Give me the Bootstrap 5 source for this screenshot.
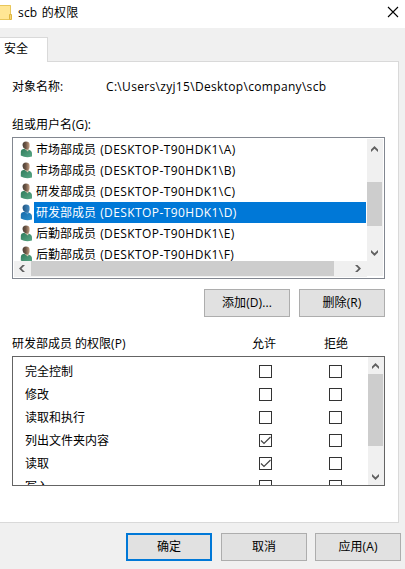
<!DOCTYPE html>
<html lang="zh-CN">
<head>
<meta charset="utf-8">
<meta name="viewport" content="width=device-width, initial-scale=1">
<title>scb 的权限</title>
<link href="https://cdn.jsdelivr.net/npm/bootstrap@5.3.0/dist/css/bootstrap.min.css" rel="stylesheet">
<style>
body{font:12px/16px "Open Sans","Noto Sans CJK SC",sans-serif;color:#000;background:#f0f0f0;width:405px;height:569px;overflow:hidden}
.titlebar{height:28px;padding-right:6px}
.folder{width:12px;height:17px;margin-top:-4px}
.title-text{margin-left:6px;margin-top:-3px;word-spacing:1px;letter-spacing:.2px}
.close-x{margin-top:-4px}
.tab{width:48px;height:25px;margin-top:9px;margin-bottom:-1px;border:1px solid #d9d9d9;border-width:1px 1px 0 0;padding:3px 0 0 4px;position:relative}
.page{width:399px;height:462px;border:1px solid #d9d9d9;border-left:0;padding:17px 13px 0 12px}
.obj-label{width:94px}
.path{letter-spacing:.32px}
.lbl-users{margin-top:22px;margin-bottom:4px}
.listbox{width:373px;height:142px;border:1px solid #828790;padding:1px}
.rows{width:353px;height:122px}
.user{height:21px;flex:none}
.user svg{width:14px;height:17px;margin:2px 0 0 6px;flex:none}
.user div{width:332px;height:21px;line-height:21px;padding-left:2px}
.user.sel div{background:#0078d7;color:#fff}
.host{letter-spacing:.42px;margin-left:1px}
.vbar{background:#f0f0f0;width:16px;padding-right:1px}
.vbar svg,.hbar svg{flex:none}
.thumb{background:#cdcdcd}
.hbar{width:353px;height:16px;background:#f0f0f0;padding-bottom:1px}
.lb-v{height:137px;padding-top:1px}.lb-v .thumb{height:44px;margin-top:25px}
.lb-v .arrow-end{margin-bottom:15px}
.winbtn{width:86px;height:28px;padding:0;border:1px solid #adadad;border-radius:0;background:#e1e1e1;font-size:12px;line-height:26px;color:#000;letter-spacing:.1px}
.winbtn.primary{border:2px solid #0078d7;line-height:24px}
.mid{gap:9px;margin-top:10px}
.heads{margin-top:19px;margin-bottom:4px}
.heads .h-name{width:240px}.heads .h-allow{width:72px}
.perms{width:373px;height:130px;border:1px solid #646464}
.perm-rows{width:355px;padding-top:3px}
.perm{height:23px;flex:none;padding-left:12px}
.perm .p-name{width:234px;flex:none}
.box{width:13px;height:13px;border:1px solid #333;background:#fff;flex:none}
.box + .box{margin-left:57px}
.box svg{display:block}
.pm-v .thumb{height:72px}
.foot{padding:10px 4px 0 126px}
.nudge{margin-left:-1px}
</style>
<script src="https://cdn.jsdelivr.net/npm/bootstrap@5.3.0/dist/js/bootstrap.bundle.min.js"></script>
</head>
<body>
<svg width="0" height="0" class="position-absolute">
<defs>
<linearGradient id="g1" x1="0" y1="0" x2="1" y2="1"><stop offset="0" stop-color="#2f7a5b"/><stop offset="1" stop-color="#5aa886"/></linearGradient>
<linearGradient id="h1"><stop offset="0" stop-color="#4a4138"/><stop offset=".45" stop-color="#6b5444"/><stop offset="1" stop-color="#c6a084"/></linearGradient>
<linearGradient id="g2" x1="0" y1="0" x2="1" y2="1"><stop offset="0" stop-color="#1668a8"/><stop offset="1" stop-color="#2b91cc"/></linearGradient>
<linearGradient id="h2"><stop offset="0" stop-color="#215480"/><stop offset="1" stop-color="#448bc2"/></linearGradient>
<symbol id="person" viewBox="0 0 14 17"><path d="M.8 14.500V11Q.8 8.300 4 7.800L8.500 8.500Q12 9.500 12 12.500V15.500Q6 17.500.8 14.500Z" fill="url(#g1)"/><path d="M4 7.600 8.800 8.300 8 10.500Z" fill="#dccbb4"/><path d="M2.500 4Q2.500.5 6 .5T9.600 3.800Q9.800 8.500 7.200 8.700Q5 8.500 3.200 6.500Z" fill="url(#h1)"/></symbol>
<symbol id="person-sel" viewBox="0 0 14 17"><path d="M.8 14.500V11Q.8 8.300 4 7.800L8.500 8.500Q12 9.500 12 12.500V15.500Q6 17.500.8 14.500Z" fill="url(#g2)"/><path d="M4 7.600 8.800 8.300 8 10.500Z" fill="#5a9fd0"/><path d="M2.500 4Q2.500.5 6 .5T9.600 3.800Q9.800 8.500 7.200 8.700Q5 8.500 3.200 6.500Z" fill="url(#h2)"/></symbol>
<symbol id="up" viewBox="0 0 15 17"><path d="M4 9.500 7.500 6 11 9.500V12L7.500 8.700 4 12Z" fill="#606060"/></symbol>
<symbol id="down" viewBox="0 0 15 17"><path d="M4 8.500 7.500 12 11 8.500V6L7.500 9.300 4 6Z" fill="#606060"/></symbol>
<symbol id="tick" viewBox="0 0 11 11"><path d="M1 5.500 4 8.500 10.500 2" fill="none" stroke="#444" stroke-width="1.200"/></symbol>
</defs>
</svg>
<header class="titlebar bg-white d-flex align-items-center">
<svg class="folder" viewBox="0 0 12 17"><path d="M0 1H11V16H0Z" fill="#ffe694"/><path d="M0 1.500H10.500V10M0 15.500H9" fill="none" stroke="#e8c65b"/><path d="M9.500 10.500H11.500V15.500H9.500Z" fill="#f8d775" stroke="#dfb53e"/></svg>
<span class="title-text">scb 的权限</span>
<svg class="close-x ms-auto" width="12" height="12" viewBox="0 0 12 12"><path d="M1 1 11 11M11 1 1 11" stroke="#000" stroke-width="1.100"/></svg>
</header>
<div class="tab bg-white">安全</div>
<main class="page bg-white">
<div class="d-flex"><span class="obj-label">对象名称:</span><span class="path">C:\Users\zyj15\Desktop\company\scb</span></div>
<div class="lbl-users">组或用户名(G):</div>
<div class="listbox d-flex">
<div>
<div class="rows d-flex flex-column overflow-hidden">
<div class="user d-flex"><svg><use href="#person"/></svg><div>市场部成员 <span class="host">(DESKTOP-T90HDK1\A)</span></div></div>
<div class="user d-flex"><svg><use href="#person"/></svg><div>市场部成员 <span class="host">(DESKTOP-T90HDK1\B)</span></div></div>
<div class="user d-flex"><svg><use href="#person"/></svg><div>研发部成员 <span class="host">(DESKTOP-T90HDK1\C)</span></div></div>
<div class="user sel d-flex"><svg><use href="#person-sel"/></svg><div>研发部成员 <span class="host">(DESKTOP-T90HDK1\D)</span></div></div>
<div class="user d-flex"><svg><use href="#person"/></svg><div>后勤部成员 <span class="host">(DESKTOP-T90HDK1\E)</span></div></div>
<div class="user d-flex"><svg><use href="#person"/></svg><div>后勤部成员 <span class="host">(DESKTOP-T90HDK1\F)</span></div></div>
</div>
<div class="hbar d-flex">
<svg width="17" height="15"><path d="M8.500 4H11L7.500 7.500 11 11H8.500L5 7.500Z" fill="#606060"/></svg>
<div class="thumb" style="width:303px"></div>
<svg class="ms-auto" width="17" height="15"><path d="M7.500 4H5L8.500 7.500 5 11H7.500L11 7.500Z" fill="#606060"/></svg>
</div>
</div>
<div class="vbar lb-v d-flex flex-column">
<svg width="15" height="17"><use href="#up"/></svg>
<div class="thumb"></div>
<svg class="arrow-end mt-auto" width="15" height="17"><use href="#down"/></svg>
</div>
</div>
<div class="mid d-flex justify-content-end"><button class="btn winbtn">添加(D)...</button><button class="btn winbtn">删除(R)</button></div>
<div class="heads d-flex"><span class="h-name">研发部成员 的权限(P)</span><span class="h-allow">允许</span><span>拒绝</span></div>
<div class="perms d-flex overflow-hidden">
<div class="perm-rows d-flex flex-column overflow-hidden">
<div class="perm d-flex align-items-center"><span class="p-name">完全控制</span><i class="box"></i><i class="box"></i></div>
<div class="perm d-flex align-items-center"><span class="p-name">修改</span><i class="box"></i><i class="box"></i></div>
<div class="perm d-flex align-items-center"><span class="p-name">读取和执行</span><i class="box"></i><i class="box"></i></div>
<div class="perm d-flex align-items-center"><span class="p-name">列出文件夹内容</span><i class="box"><svg width="11" height="11"><use href="#tick"/></svg></i><i class="box"></i></div>
<div class="perm d-flex align-items-center"><span class="p-name">读取</span><i class="box"><svg width="11" height="11"><use href="#tick"/></svg></i><i class="box"></i></div>
<div class="perm d-flex align-items-center"><span class="p-name">写入</span><i class="box"></i><i class="box"></i></div>
</div>
<div class="vbar pm-v d-flex flex-column">
<svg width="15" height="17"><use href="#up"/></svg>
<div class="thumb"></div>
<svg class="mt-auto" width="15" height="17"><use href="#down"/></svg>
</div>
</div>
</main>
<footer class="foot d-flex justify-content-between"><button class="btn winbtn primary">确定</button><button class="btn winbtn">取消</button><button class="btn winbtn nudge">应用(A)</button></footer>
</body>
</html>
